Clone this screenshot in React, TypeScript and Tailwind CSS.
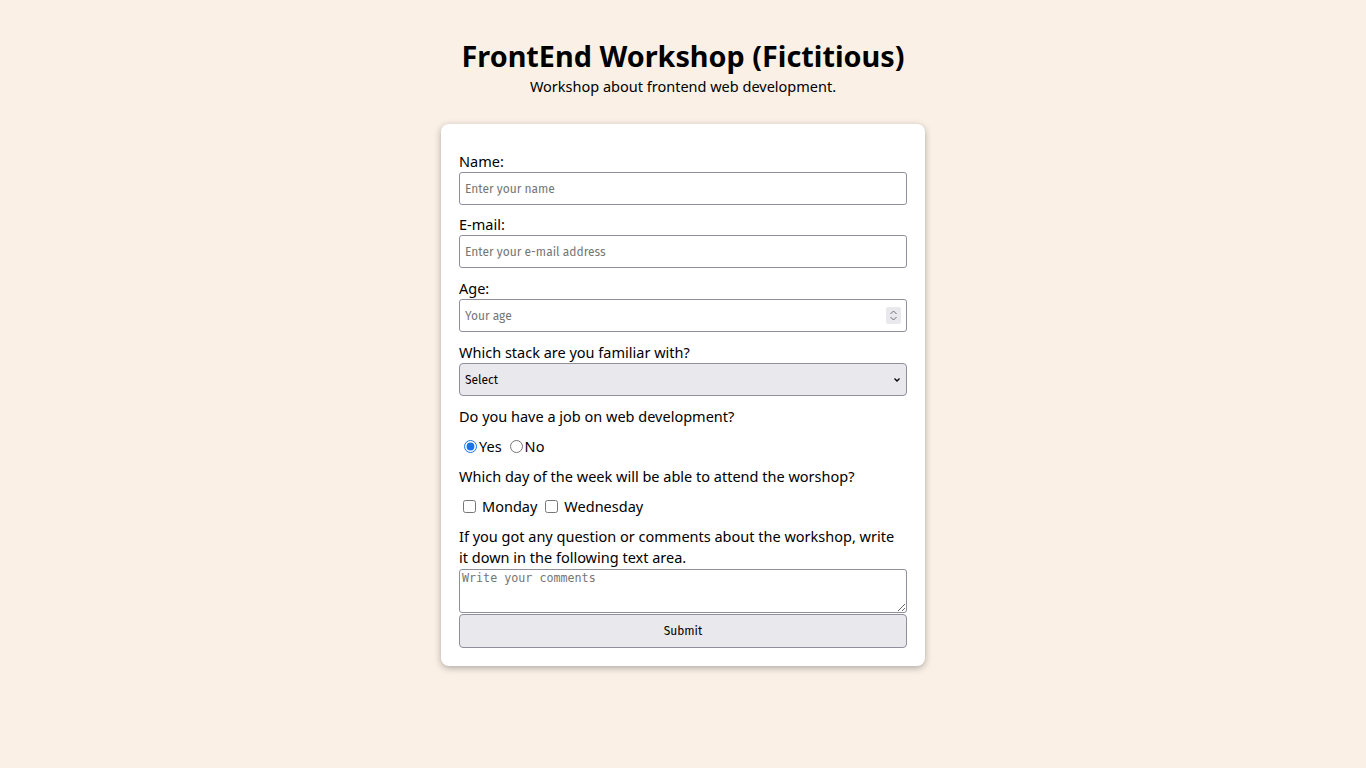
import React from 'react'

const labelCls = 'block pt-[1px] text-[14.5px] leading-[21px]'
const ctrlFont = "font-['Fira_Sans',_'Noto_Sans',_sans-serif]"
const fieldCls = `block w-full h-[33px] rounded-[3px] border border-[#8f8f9d] bg-white px-[5px] text-[12px] ${ctrlFont} placeholder:text-[#757575] outline-none`

export default function App() {
  return (
    <div className="min-h-[768px] bg-[#faf0e6] pt-[38px] text-black font-['Noto_Sans',_sans-serif]">
      <header className="text-center">
        <h1 className="text-[28.8px] font-bold leading-[36px]">FrontEnd Workshop (Fictitious)</h1>
        <p className="mt-[2px] text-[14.5px] leading-[20px]">Workshop about frontend web development.</p>
      </header>

      <form
        className="mx-auto mt-[28px] w-[484px] rounded-[8px] bg-white px-[18px] pt-[26px] pb-[18px] shadow-[0_2px_7px_rgba(0,0,0,0.3)]"
        onSubmit={(e) => e.preventDefault()}
      >
        <label htmlFor="name" className={labelCls}>Name:</label>
        <input id="name" type="text" placeholder="Enter your name" className={fieldCls} />

        <label htmlFor="email" className={`${labelCls} mt-[8px]`}>E-mail:</label>
        <input id="email" type="email" placeholder="Enter your e-mail address" className={fieldCls} />

        <label htmlFor="age" className={`${labelCls} mt-[9px]`}>Age:</label>
        <div className="relative">
          <input id="age" type="number" placeholder="Your age" className={fieldCls} />
          <span className="pointer-events-none absolute right-[6px] top-[8px] flex h-[17px] w-[15px] flex-col items-center justify-center rounded-[2px] bg-[#e9e9ed]">
            <svg width="9" height="13" viewBox="0 0 9 13" fill="none" stroke="#6b6b75" strokeWidth="1">
              <path d="M1.5 5 L4.5 2 L7.5 5" />
              <path d="M1.5 8 L4.5 11 L7.5 8" />
            </svg>
          </span>
        </div>

        <label htmlFor="stack" className={`${labelCls} mt-[9px]`}>Which stack are you familiar with?</label>
        <div className="relative">
          <select
            id="stack"
            defaultValue=""
            className={`block h-[33px] w-full appearance-none rounded-[4px] border border-[#8f8f9d] bg-[#e9e9ed] px-[5px] text-[12px] ${ctrlFont} outline-none`}
          >
            <option value="" disabled>Select</option>
            <option value="front">Frontend</option>
            <option value="back">Backend</option>
            <option value="full">Fullstack</option>
          </select>
          <svg
            className="pointer-events-none absolute right-[6px] top-[13px]"
            width="8"
            height="8"
            viewBox="0 0 8 8"
            fill="none"
            stroke="#000"
            strokeWidth="1.3"
          >
            <path d="M1.5 2.5 L4 5 L6.5 2.5" />
          </svg>
        </div>

        <p className={`${labelCls} mt-[9px]`}>Do you have a job on web development?</p>
        <div className="mt-[8px] flex h-[22px] items-center text-[14.5px] leading-[22px]">
          <input id="yes" type="radio" name="job" defaultChecked className="ml-[5px] mr-[2px] h-[13px] w-[13px] accent-[#1a73e8]" />
          <label htmlFor="yes">Yes</label>
          <input id="no" type="radio" name="job" className="ml-[8px] mr-[2px] h-[13px] w-[13px]" />
          <label htmlFor="no">No</label>
        </div>

        <p className={`${labelCls} mt-[8px]`}>Which day of the week will be able to attend the worshop?</p>
        <div className="mt-[8px] flex h-[22px] items-center text-[14.5px] leading-[22px]">
          <input id="monday" type="checkbox" className="ml-[4px] mr-[6px] h-[13px] w-[13px]" />
          <label htmlFor="monday">Monday</label>
          <input id="wednesday" type="checkbox" className="ml-[8px] mr-[6px] h-[13px] w-[13px]" />
          <label htmlFor="wednesday">Wednesday</label>
        </div>

        <label htmlFor="comments" className={`${labelCls} mt-[8px] pr-[8px]`}>
          If you got any question or comments about the workshop, write it down in the following text area.
        </label>
        <textarea
          id="comments"
          placeholder="Write your comments"
          className="mt-[1px] block h-[44px] w-full rounded-[3px] border border-[#8f8f9d] px-[2px] py-[1px] text-[11.7px] leading-[15px] font-['DejaVu_Sans_Mono',_monospace] placeholder:text-[#757575] outline-none"
        />
        <button
          type="submit"
          className={`mt-[1px] block h-[34px] w-full rounded-[4px] border border-[#8f8f9d] bg-[#e9e9ed] text-[12px] ${ctrlFont}`}
        >
          Submit
        </button>
      </form>
    </div>
  )
}
